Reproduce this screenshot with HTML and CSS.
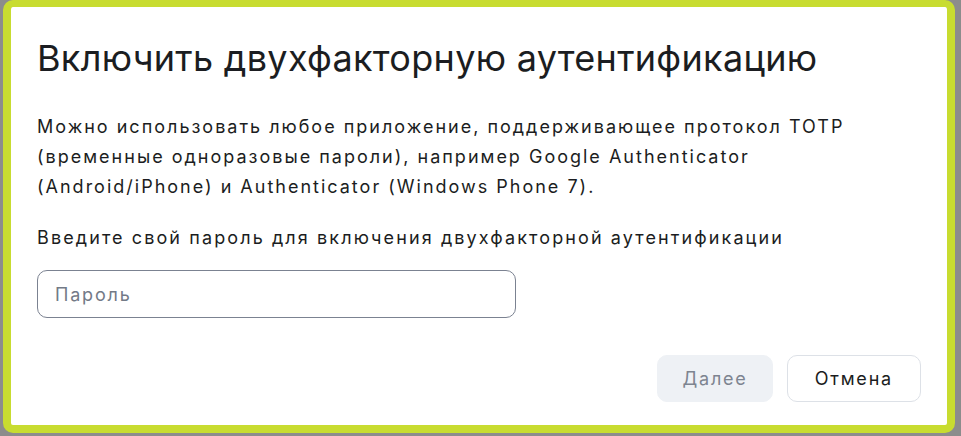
FILE: index.html
```html
<!DOCTYPE html>
<html lang="ru">
<head>
  <meta charset="UTF-8" />
  <meta name="viewport" content="width=device-width, initial-scale=1.0"/>
  <title>Двухфакторная аутентификация</title>
  <link rel="stylesheet" href="styles.css">
</head>
<body>
  <div class="dialog">
    <h1 class="dialog-title">Включить двухфакторную аутентификацию</h1>
    <p class="dialog-text">
      Можно использовать любое приложение, поддерживающее протокол TOTP<br>
      (временные одноразовые пароли), например Google Authenticator<br>
      (Android/iPhone) и Authenticator (Windows Phone 7).
    </p>
    <label class="dialog-label" for="password">Введите свой пароль для включения двухфакторной аутентификации</label>
    <input class="dialog-input" id="password" type="password" placeholder="Пароль">
    <div class="dialog-actions">
      <button type="button" class="btn btn-primary" disabled>Далее</button>
      <button type="button" class="btn btn-secondary">Отмена</button>
    </div>
  </div>
</body>
</html>
```

FILE: styles.css
```css
html, body {
  margin: 0;
  height: 100%;
}
body {
  background: #8c8c8c;
  font-family: Inter, "Noto Sans", sans-serif;
  color: #1b1d21;
  overflow: hidden;
}
.dialog {
  box-sizing: border-box;
  width: 952px;
  height: 433px;
  margin-left: 3px;
  background: #fff;
  border: 8px solid #c8dc30;
  border-top-width: 7px;
  border-radius: 10px;
  padding: 0 26px;
  display: flex;
  flex-direction: column;
  align-items: flex-start;
}
.dialog-title {
  font-size: 36px;
  font-weight: 400;
  margin: 29px 0 0;
  line-height: 44px;
  letter-spacing: 0.3px;
}
.dialog-text {
  font-size: 18px;
  line-height: 30px;
  letter-spacing: 2px;
  margin: 32px 0 0;
}
.dialog-label {
  font-size: 18px;
  line-height: 30px;
  letter-spacing: 2.1px;
  margin-top: 21px;
}
.dialog-input {
  box-sizing: border-box;
  width: 479px;
  height: 48px;
  margin-top: 17px;
  padding: 0 17px;
  border: 1px solid #7b8291;
  border-radius: 10px;
  font: inherit;
  font-size: 18px;
  letter-spacing: 1.8px;
  color: #1b1d21;
  outline: none;
}
.dialog-input::placeholder { color: #737a87; }
.dialog-actions {
  margin-top: auto;
  margin-bottom: 23px;
  align-self: stretch;
  display: flex;
  justify-content: flex-end;
  gap: 14px;
}
.btn {
  height: 47px;
  border-radius: 10px;
  font: inherit;
  font-size: 18px;
  letter-spacing: 1.8px;
  cursor: pointer;
}
.btn-primary {
  padding: 0 24px;
  background: #eef1f5;
  border: 1px solid #eef1f5;
  color: #7d8490;
}
.btn-secondary {
  padding: 0 27px;
  background: #fff;
  border: 1px solid #dde1e7;
  color: #1b1d21;
}
```
